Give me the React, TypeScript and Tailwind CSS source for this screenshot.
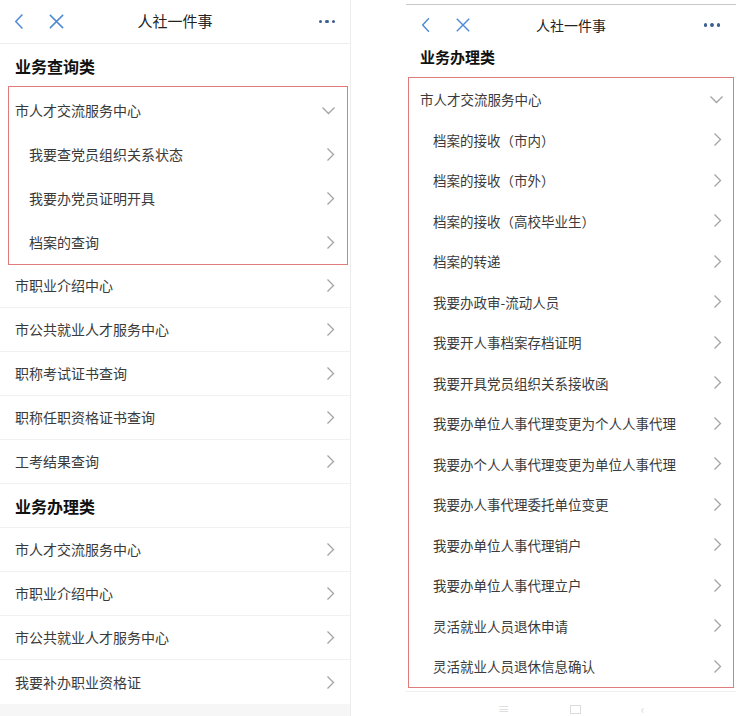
const cjk = { fontFamily: '"Noto Sans CJK SC", "Noto Sans", sans-serif' };

function ChevronRight() {
  return (
    <svg width="9" height="15" viewBox="0 0 9 15" fill="none">
      <path d="M1.5 1.5 L7.5 7.5 L1.5 13.5" stroke="#a3a3a3" strokeWidth="1.3" />
    </svg>
  );
}

function ChevronDown() {
  return (
    <svg width="15" height="9" viewBox="0 0 15 9" fill="none">
      <path d="M1.5 1.5 L7.5 7.5 L13.5 1.5" stroke="#a3a3a3" strokeWidth="1.3" />
    </svg>
  );
}

function NavIcons({ size }: { size: number }) {
  return (
    <div className="flex items-center gap-[24px]">
      <svg width={size * 0.6} height={size} viewBox="0 0 10 18" fill="none">
        <path d="M8.5 1.5 L1.5 9 L8.5 16.5" stroke="#4f8ad6" strokeWidth="1.6" />
      </svg>
      <svg width={size} height={size} viewBox="0 0 18 18" fill="none">
        <path d="M2 2 L16 16 M16 2 L2 16" stroke="#4f8ad6" strokeWidth="1.6" />
      </svg>
    </div>
  );
}

function Dots() {
  return (
    <div className="flex gap-[3px]">
      <span className="h-[3.5px] w-[3.5px] rounded-full bg-[#3d5f8f]" />
      <span className="h-[3.5px] w-[3.5px] rounded-full bg-[#3d5f8f]" />
      <span className="h-[3.5px] w-[3.5px] rounded-full bg-[#3d5f8f]" />
    </div>
  );
}

function LeftRow({ label, sub, sep = true }: { label: string; sub?: boolean; sep?: boolean }) {
  return (
    <div
      className={`flex h-[44px] items-center justify-between pr-[15px] text-[14px] text-[#3a3a3a] ${sub ? 'pl-[29px]' : 'pl-[15px]'} ${sep ? 'border-b border-[#f1f1f1]' : ''}`}
    >
      <span>{label}</span>
      <ChevronRight />
    </div>
  );
}

function LeftPhone() {
  return (
    <div className="flex h-[716px] w-[351px] shrink-0 flex-col border-r border-[#ededed] bg-white" style={cjk}>
      <div className="flex h-[44px] items-center border-b border-[#eeeeee] px-[14px]">
        <div className="w-[100px]">
          <NavIcons size={17} />
        </div>
        <div className="flex-1 text-center text-[15px] text-[#222]">人社一件事</div>
        <div className="flex w-[100px] justify-end pr-[1px]">
          <Dots />
        </div>
      </div>
      <div className="flex h-[44px] items-center px-[15px] text-[16px] font-bold text-[#111]">业务查询类</div>
      <div className="relative">
        <div className="flex h-[44px] items-center justify-between pl-[15px] pr-[14px] text-[14px] text-[#3a3a3a]">
          <span>市人才交流服务中心</span>
          <ChevronDown />
        </div>
        <LeftRow label="我要查党员组织关系状态" sub sep={false} />
        <LeftRow label="我要办党员证明开具" sub sep={false} />
        <LeftRow label="档案的查询" sub sep={false} />
        <div className="pointer-events-none absolute -top-[2px] -bottom-[1px] left-[8px] right-[2px] border-[1.5px] border-[#df7b7b]" />
      </div>
      <LeftRow label="市职业介绍中心" />
      <LeftRow label="市公共就业人才服务中心" />
      <LeftRow label="职称考试证书查询" />
      <LeftRow label="职称任职资格证书查询" />
      <LeftRow label="工考结果查询" />
      <div className="flex h-[44px] items-center border-b border-[#f1f1f1] px-[15px] text-[16px] font-bold text-[#111]">
        业务办理类
      </div>
      <LeftRow label="市人才交流服务中心" />
      <LeftRow label="市职业介绍中心" />
      <LeftRow label="市公共就业人才服务中心" />
      <LeftRow label="我要补办职业资格证" sep={false} />
      <div className="flex-1 bg-[#f6f6f6]" />
    </div>
  );
}

const rightItems = [
  '档案的接收（市内）',
  '档案的接收（市外）',
  '档案的接收（高校毕业生）',
  '档案的转递',
  '我要办政审-流动人员',
  '我要开人事档案存档证明',
  '我要开具党员组织关系接收函',
  '我要办单位人事代理变更为个人人事代理',
  '我要办个人人事代理变更为单位人事代理',
  '我要办人事代理委托单位变更',
  '我要办单位人事代理销户',
  '我要办单位人事代理立户',
  '灵活就业人员退休申请',
  '灵活就业人员退休信息确认',
];

function RightPhone() {
  return (
    <div className="mt-[4px] flex h-[712px] w-[330px] shrink-0 flex-col border-t border-[#c9c9c9] bg-white" style={cjk}>
      <div className="flex h-[40px] items-center px-[14px]">
        <div className="w-[100px] pl-[1px]">
          <NavIcons size={16} />
        </div>
        <div className="flex-1 text-center text-[14px] text-[#222]">人社一件事</div>
        <div className="flex w-[100px] justify-end pr-[2px]">
          <Dots />
        </div>
      </div>
      <div className="flex h-[24px] items-center px-[14px] text-[15px] font-bold text-[#111]">业务办理类</div>
      <div className="mx-[2px] mt-[8px] border-[1.5px] border-[#df7b7b] pt-[1px]">
        <div className="flex h-[40.5px] items-center justify-between pl-[11px] pr-[9px] text-[13.5px] text-[#3a3a3a]">
          <span>市人才交流服务中心</span>
          <ChevronDown />
        </div>
        {rightItems.map((t) => (
          <div key={t} className="flex h-[40.5px] items-center justify-between pl-[24px] pr-[11px] text-[13.5px] text-[#3a3a3a]">
            <span>{t}</span>
            <ChevronRight />
          </div>
        ))}
      </div>
      <div className="mt-[3px] flex flex-1 items-end justify-center gap-[60px] border-t border-[#f0f0f0] pb-[1px]">
        <span className="text-[12px] leading-none text-[#d8d8d8]">≡</span>
        <span className="mb-[1px] h-[9px] w-[11px] border border-[#dcdcdc]" />
        <span className="text-[12px] leading-none text-[#d8d8d8]">‹</span>
      </div>
    </div>
  );
}

export default function App() {
  return (
    <div className="flex h-[716px] w-[740px] overflow-hidden bg-white">
      <LeftPhone />
      <div className="w-[55px] shrink-0" />
      <RightPhone />
    </div>
  );
}
